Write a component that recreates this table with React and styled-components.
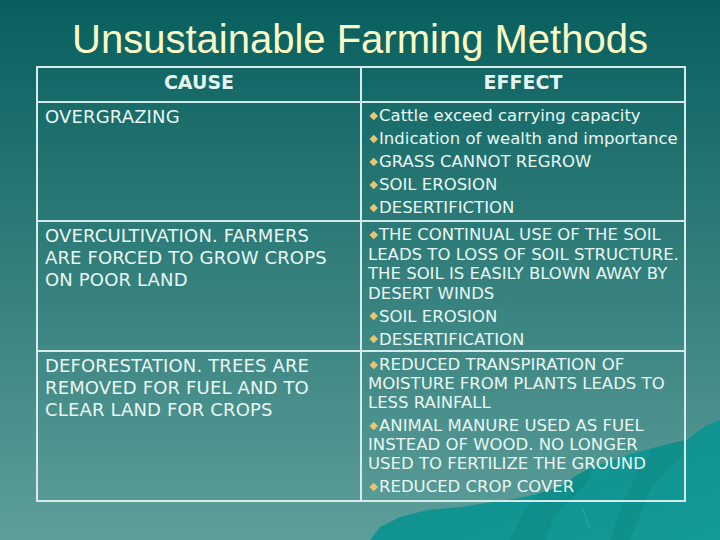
import React from 'react';
import styled, { createGlobalStyle } from 'styled-components';

const GlobalStyle = createGlobalStyle`
    html, body {
        margin: 0;
        padding: 0;
        background: #3d8582;
    }
`;

const rows = [
    {
        cause: 'OVERGRAZING',
        effects: [
            'Cattle exceed carrying capacity',
            'Indication of wealth and importance',
            'GRASS CANNOT REGROW',
            'SOIL EROSION',
            'DESERTIFICTION',
        ],
        height: 119,
    },
    {
        cause: 'OVERCULTIVATION. FARMERS ARE FORCED TO GROW CROPS ON POOR LAND',
        effects: [
            'THE CONTINUAL USE OF THE SOIL LEADS TO LOSS OF SOIL STRUCTURE. THE SOIL IS EASILY BLOWN AWAY BY DESERT WINDS',
            'SOIL EROSION',
            'DESERTIFICATION',
        ],
        height: 130,
    },
    {
        cause: 'DEFORESTATION. TREES ARE REMOVED FOR FUEL AND TO CLEAR LAND FOR CROPS',
        effects: [
            'REDUCED TRANSPIRATION OF MOISTURE FROM PLANTS LEADS TO LESS RAINFALL',
            'ANIMAL MANURE USED AS FUEL INSTEAD OF WOOD. NO LONGER USED TO FERTILIZE THE GROUND',
            'REDUCED CROP COVER',
        ],
        height: 150,
        tight: true,
    },
];

const Mountain = () => (
    <MountainArt viewBox="0 0 360 130" width="360" height="130">
        <defs>
            <linearGradient id="rock" x1="0" y1="0" x2="1" y2="1">
                <stop offset="0" stopColor="#0f8e8b" />
                <stop offset="1" stopColor="#149a97" />
            </linearGradient>
        </defs>
        <polygon
            fill="url(#rock)"
            points="10,130 20,117 40,107 67,100 100,97 133,92 160,88 180,83 200,77 217,65 233,57 253,50 273,43 293,38 313,33 327,30 337,22 347,15 360,10 360,130"
        />
        <polygon
            fill="#0c8582"
            opacity="0.5"
            points="180,83 200,77 217,65 233,57 225,75 210,90 195,105 185,130 150,130 165,100"
        />
        <polygon
            fill="#0c8481"
            opacity="0.4"
            points="293,38 313,33 327,30 320,48 305,62 290,80 282,100 270,130 250,130 262,95 278,62"
        />
        <polyline
            fill="none"
            stroke="#5fb8b4"
            strokeWidth="1"
            opacity="0.4"
            points="222,96 226,108 229,118"
        />
    </MountainArt>
);

const App = () => {
    return (
        <Slide>
            <GlobalStyle />
            <Mountain />
            <Title>Unsustainable Farming Methods</Title>
            <Grid>
                <HeadCell divider>CAUSE</HeadCell>
                <HeadCell>EFFECT</HeadCell>
                {rows.map((row) => (
                    <React.Fragment key={row.cause}>
                        <CauseCell style={{ height: row.height }}>
                            {row.cause}
                        </CauseCell>
                        <EffectCell style={{ height: row.height }}>
                            {row.effects.map((text) => (
                                <Point key={text} tight={row.tight}>
                                    <Bullet />
                                    {text}
                                </Point>
                            ))}
                        </EffectCell>
                    </React.Fragment>
                ))}
            </Grid>
        </Slide>
    );
};

const Slide = styled.div`
    position: relative;
    width: 720px;
    height: 540px;
    overflow: hidden;
    box-sizing: border-box;
    padding-top: 19px;
    background: linear-gradient(180deg, #075f5e 0%, #2a7976 40%, #5e9e9a 100%);
    font-family: 'DejaVu Sans', Verdana, sans-serif;
    color: #e9f7f3;
`;

const MountainArt = styled.svg`
    position: absolute;
    right: 0;
    bottom: 0;
    display: block;
`;

const Title = styled.h1`
    position: relative;
    margin: 0 0 7px;
    height: 40px;
    font-family: 'Liberation Sans', Arial, sans-serif;
    font-weight: normal;
    font-size: 40px;
    line-height: 40px;
    text-align: center;
    color: #fbfbc6;
`;

const Grid = styled.div`
    position: relative;
    display: grid;
    grid-template-columns: 324px 322px;
    width: 650px;
    margin-left: 36px;
    box-sizing: border-box;
    border: 2px solid #d6ecea;
`;

const HeadCell = styled.div`
    height: 33px;
    box-sizing: border-box;
    padding-top: 3px;
    border-right: ${(p) => (p.divider ? '2px solid #d6ecea' : 'none')};
    font-weight: bold;
    font-size: 19px;
    line-height: 22px;
    text-align: center;
    color: #e4f4f0;
`;

const CauseCell = styled.div`
    box-sizing: border-box;
    padding: 2.5px 17px 0 7px;
    border-top: 2px solid #d6ecea;
    border-right: 2px solid #d6ecea;
    font-size: 18px;
    line-height: 22px;
    letter-spacing: 0.15px;
`;

const EffectCell = styled.div`
    box-sizing: border-box;
    padding: 3px 2px 0 6px;
    border-top: 2px solid #d6ecea;
`;

const Point = styled.p`
    margin: 0 0 ${(p) => (p.tight ? '4px' : '3.5px')};
    font-size: 16.5px;
    line-height: ${(p) => (p.tight ? '19px' : '19.5px')};
`;

const Bullet = styled.span`
    display: inline-block;
    width: 5.5px;
    height: 5.5px;
    margin: 0 3px 0 2.5px;
    vertical-align: 3px;
    background: #e8c670;
    transform: rotate(45deg);
`;

export default App;
